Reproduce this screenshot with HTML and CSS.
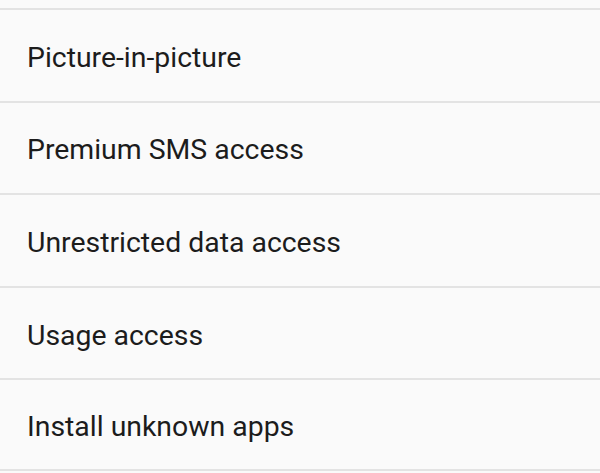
FILE: index.html
```html
<!DOCTYPE html>
<html>
<head>
<meta charset="utf-8">
<link rel="stylesheet" href="styles.css">
</head>
<body>
<div class="list">
  <div class="row">Picture-in-picture</div>
  <div class="row">Premium SMS access</div>
  <div class="row">Unrestricted data access</div>
  <div class="row">Usage access</div>
  <div class="row">Install unknown apps</div>
</div>
</body>
</html>
```
FILE: styles.css
```css
html, body {
  margin: 0;
  padding: 0;
  background: #fafafa;
}
body {
  font-family: Roboto, "Noto Sans", sans-serif;
  color: #1c1c1c;
}
.list {
  padding-top: 8px;
}
.row {
  box-sizing: border-box;
  height: 92.6px;
  border-top: 2px solid #e3e3e3;
  padding-left: 27px;
  display: flex;
  align-items: center;
  font-size: 28.4px;
  padding-top: 4px;
}
.row:last-child {
  border-bottom: 2px solid #e3e3e3;
}
```
